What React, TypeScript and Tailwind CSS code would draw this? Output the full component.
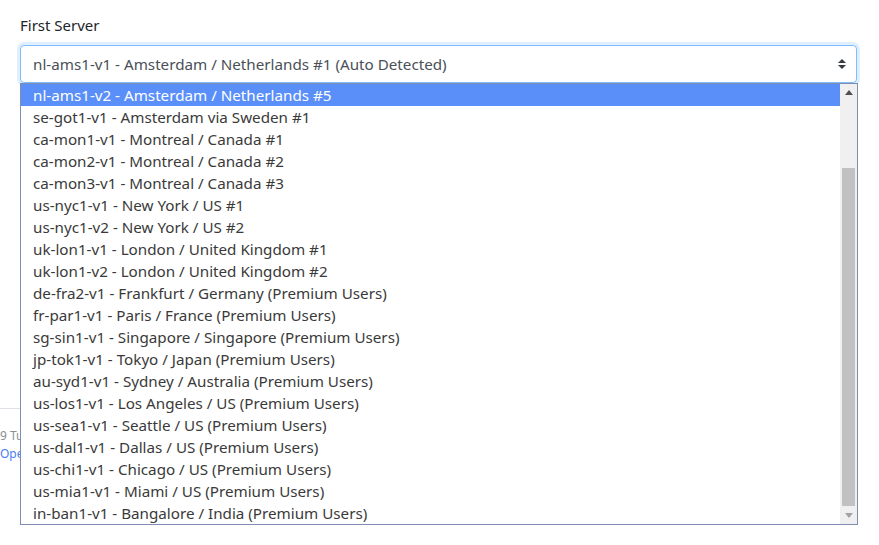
const servers = [
  "nl-ams1-v2 - Amsterdam / Netherlands #5",
  "se-got1-v1 - Amsterdam via Sweden #1",
  "ca-mon1-v1 - Montreal / Canada #1",
  "ca-mon2-v1 - Montreal / Canada #2",
  "ca-mon3-v1 - Montreal / Canada #3",
  "us-nyc1-v1 - New York / US #1",
  "us-nyc1-v2 - New York / US #2",
  "uk-lon1-v1 - London / United Kingdom #1",
  "uk-lon1-v2 - London / United Kingdom #2",
  "de-fra2-v1 - Frankfurt / Germany (Premium Users)",
  "fr-par1-v1 - Paris / France (Premium Users)",
  "sg-sin1-v1 - Singapore / Singapore (Premium Users)",
  "jp-tok1-v1 - Tokyo / Japan (Premium Users)",
  "au-syd1-v1 - Sydney / Australia (Premium Users)",
  "us-los1-v1 - Los Angeles / US (Premium Users)",
  "us-sea1-v1 - Seattle / US (Premium Users)",
  "us-dal1-v1 - Dallas / US (Premium Users)",
  "us-chi1-v1 - Chicago / US (Premium Users)",
  "us-mia1-v1 - Miami / US (Premium Users)",
  "in-ban1-v1 - Bangalore / India (Premium Users)",
];

export default function App() {
  return (
    <div
      className="relative w-[879px] h-[545px] overflow-hidden bg-white text-[#212529]"
      style={{ fontFamily: '"Segoe UI", "Noto Sans", "Open Sans", sans-serif' }}
    >
      <div className="px-5 pt-[15px]">
        <label className="block text-[15px] leading-[20px] mb-[10px]">First Server</label>
        <div className="flex items-center justify-between h-[38px] w-[837px] rounded-[4px] border border-[#80bdff] bg-white pl-3 pr-[8px] text-[15.2px] text-[#495057] shadow-[0_0_0_3px_rgba(0,123,255,0.12)]">
          <span>nl-ams1-v1 - Amsterdam / Netherlands #1 (Auto Detected)</span>
          <svg width="10" height="14" viewBox="0 0 10 14" className="mr-[1px]">
            <path d="M1 6 L5 2 L9 6 Z" fill="#343a40" />
            <path d="M1 8 L5 12 L9 8 Z" fill="#343a40" />
          </svg>
        </div>
      </div>

      {/* page footer, mostly hidden under the open list */}
      <div className="mt-[325px] w-[820px] border-t border-[#dee2e6] pt-[18px] text-[12px] leading-[18px]">
        <div className="text-[#8a8f94]">9 Tu</div>
        <div className="text-[#4a7ef0]">Open</div>
      </div>

      {/* open options list */}
      <div className="absolute left-5 top-[83px] flex h-[442px] w-[838px] border border-[#7f8db3] bg-white">
        <ul className="flex-1 text-[15.2px] leading-[22px] text-[#3a3a3a]">
          {servers.map((s, i) => (
            <li
              key={s}
              className={
                i === 0
                  ? "h-[22px] pl-3 bg-[#5a8ff9] text-white"
                  : "h-[22px] pl-3"
              }
            >
              {s}
            </li>
          ))}
        </ul>
        <div className="flex w-[17px] flex-col bg-[#f0f0f0]">
          <div className="flex h-[17px] items-center justify-center">
            <svg width="8" height="5" viewBox="0 0 8 5">
              <path d="M0 5 L4 0 L8 5 Z" fill="#505050" />
            </svg>
          </div>
          <div className="mt-[67px] mb-[1px] mx-[2px] flex-1 bg-[#c1c1c1]" />
          <div className="flex h-[17px] items-center justify-center">
            <svg width="8" height="5" viewBox="0 0 8 5">
              <path d="M0 0 L4 5 L8 0 Z" fill="#a3a3a3" />
            </svg>
          </div>
        </div>
      </div>
    </div>
  );
}
